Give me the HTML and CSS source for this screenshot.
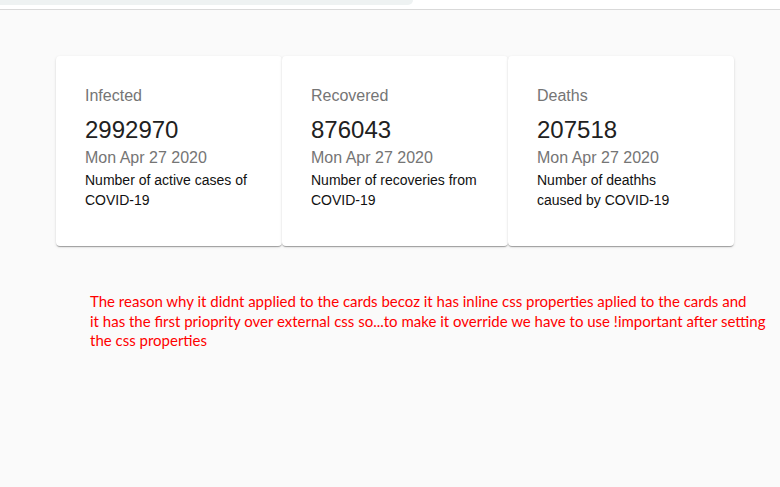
FILE: index.html
```html
<!DOCTYPE html>
<html>
<head>
<meta charset="utf-8">
<link rel="stylesheet" href="styles.css">
</head>
<body>
<div class="topbar"><div class="tab"></div></div>
<main class="page">
  <section class="cards">
    <div class="card">
      <p class="label">Infected</p>
      <p class="value">2992970</p>
      <p class="date">Mon Apr 27 2020</p>
      <p class="desc">Number of active cases of COVID-19</p>
    </div>
    <div class="card">
      <p class="label">Recovered</p>
      <p class="value">876043</p>
      <p class="date">Mon Apr 27 2020</p>
      <p class="desc">Number of recoveries from COVID-19</p>
    </div>
    <div class="card">
      <p class="label">Deaths</p>
      <p class="value">207518</p>
      <p class="date">Mon Apr 27 2020</p>
      <p class="desc">Number of deathhs caused by COVID-19</p>
    </div>
  </section>
  <p class="note">The reason why it didnt applied to the cards becoz it has inline css properties aplied to the cards and<br>it has the first prioprity over external css so...to make it override we have to use !important after setting<br>the css properties</p>
</main>
</body>
</html>
```
FILE: styles.css
```css
html, body { margin: 0; padding: 0; }
body {
  background: #fafafa;
  font-family: "Liberation Sans", Arial, sans-serif;
  width: 780px;
  height: 487px;
  overflow: hidden;
}
.topbar {
  height: 9px;
  background: #ffffff;
  border-bottom: 1px solid #d9d9d9;
}
.tab {
  width: 413px;
  height: 5px;
  background: #eef2f2;
  border-bottom-right-radius: 6px;
}
.page {
  padding: 46px 0 0 56px;
}
.cards {
  display: flex;
  width: 678px;
}
.card {
  width: 226px;
  box-sizing: border-box;
  height: 190px;
  padding: 28px 30px 0 29px;
  background: #fff;
  border-radius: 4px;
  box-shadow: 0 2px 1px -1px rgba(0,0,0,.2), 0 1px 1px 0 rgba(0,0,0,.14), 0 1px 3px 0 rgba(0,0,0,.12);
}
.card p { margin: 0; }
.label {
  font-size: 16px;
  line-height: 24px;
  color: #757575;
  margin-bottom: 5.6px !important;
}
.value {
  font-size: 24px;
  line-height: 32px;
  color: #212121;
}
.date {
  font-size: 16px;
  line-height: 24px;
  color: #757575;
}
.desc {
  font-size: 14px;
  line-height: 20px;
  color: #111;
}
.note {
  margin: 46px 0 0 34px;
  font-family: Lato, "Open Sans", sans-serif;
  font-size: 15px;
  line-height: 19.5px;
  color: #ff0000;
  white-space: nowrap;
}
```
